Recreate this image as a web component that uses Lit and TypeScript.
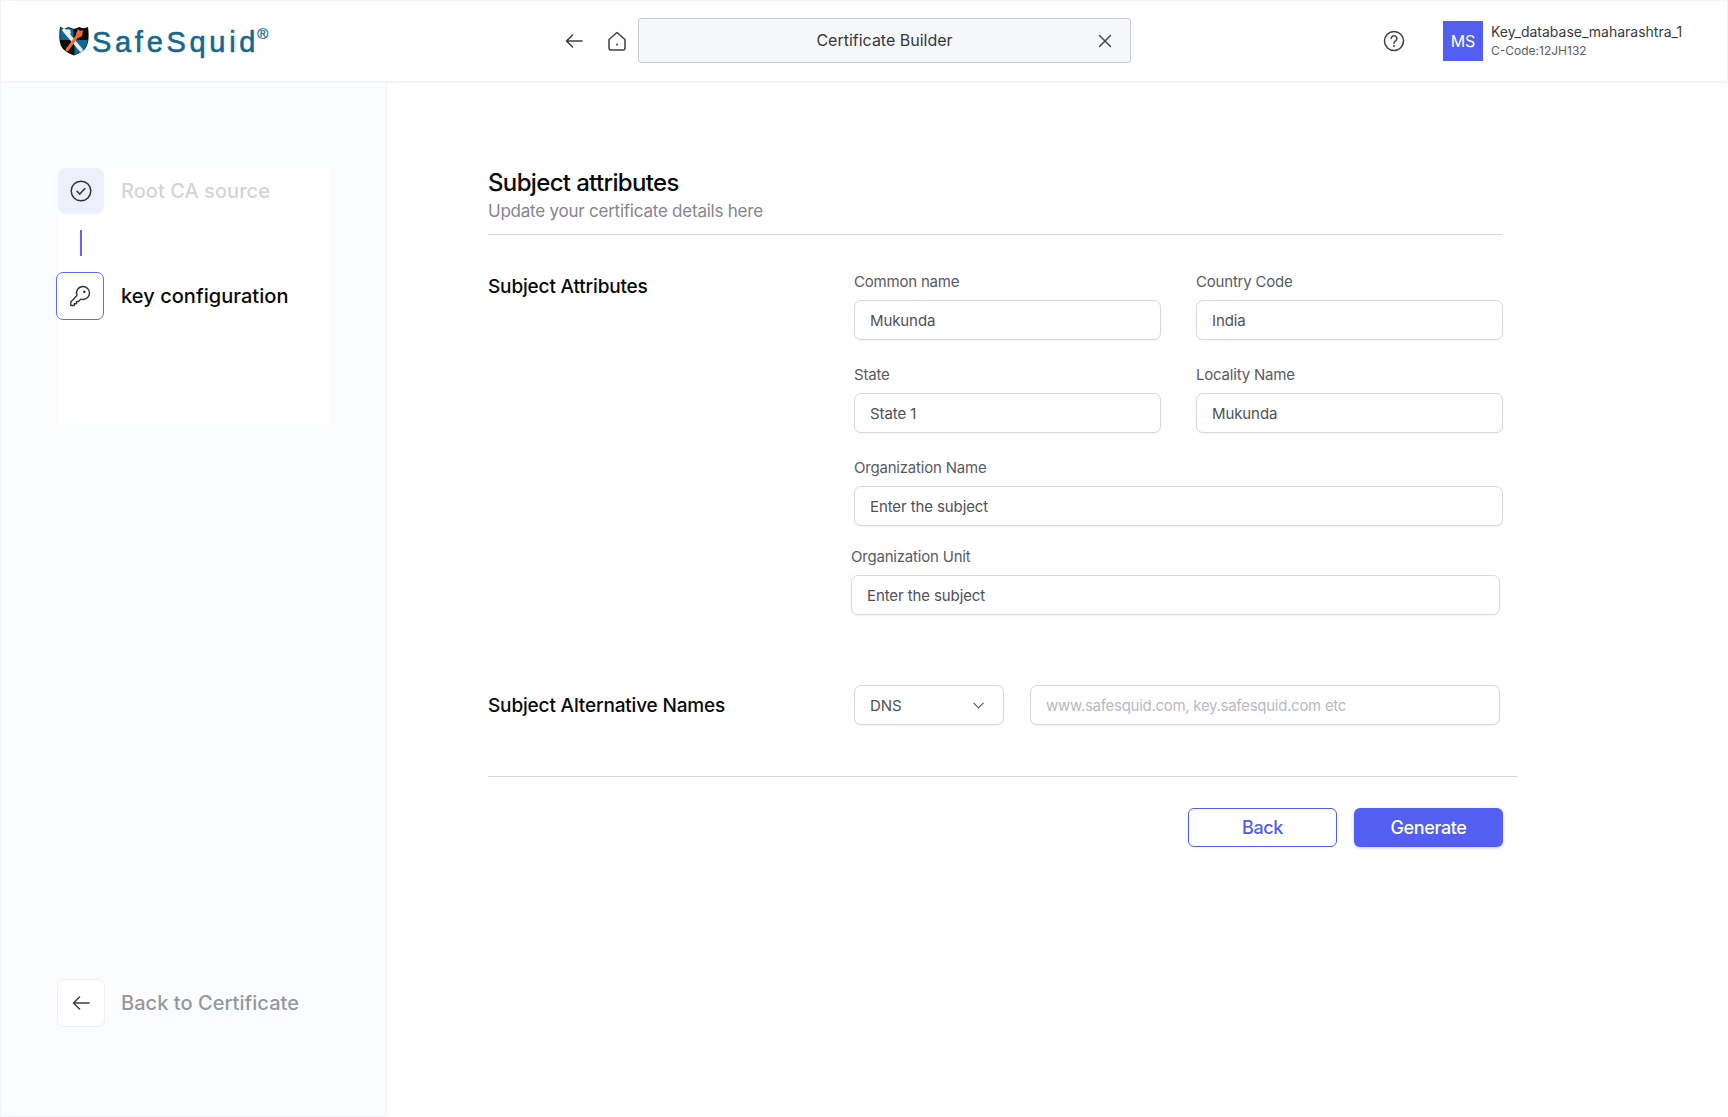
import { LitElement, html, css, svg } from "lit";
import { customElement } from "lit/decorators.js";

const arrowLeft = svg`<path d="M20 12H4.5M10.5 6l-6 6 6 6" fill="none" stroke="currentColor" stroke-width="1.6" stroke-linecap="round" stroke-linejoin="round"/>`;

@customElement("app-root")
export class AppRoot extends LitElement {
  static styles = css`
    :host { display: block; width: 1728px; height: 1117px; background: #fff; font-family: Inter, "Liberation Sans", sans-serif; color: #3f4046; overflow: hidden; }
    * { box-sizing: border-box; }
    .header { height: 83px; padding-bottom: 1px; border: 1px solid #f3f4f9; border-bottom-width: 2px; display: flex; align-items: center; position: relative; }
    .logo { width: 504px; padding-left: 57px; display: flex; align-items: center; gap: 2px; margin-top: -1px; flex: none; }
    .logo-text { font-family: "Liberation Sans", sans-serif; font-size: 29px; color: #14688e; letter-spacing: 3.7px; line-height: 34px; margin-top: 3px; -webkit-text-stroke: .6px #14688e; }
    .logo-text sup { font-size: 15px; letter-spacing: 0; line-height: 0; vertical-align: 13px; margin-left: -2px; -webkit-text-stroke: .3px #14688e; }
    .nav { display: flex; align-items: center; flex: none; }
    .nav-back { width: 24px; height: 24px; color: #3f4046; margin-left: 57px; }
    .nav-home { width: 24px; height: 24px; color: #3f4046; margin-left: 19px; }
    .tab { width: 493px; height: 45px; margin-left: 9px; background: #f6f7f9; border: 1px solid #c9cbd4; border-radius: 3px; display: flex; align-items: center; justify-content: center; position: relative; font-size: 16px; color: #36373c; padding-bottom: 1px; }
    .tab svg { position: absolute; right: 14px; top: 11px; width: 22px; height: 22px; color: #46474c; }
    .help { width: 24px; height: 24px; margin-left: 251px; color: #3f4046; flex: none; }
    .avatar { width: 40px; height: 40px; background: #525ff0; color: #fff; font-size: 16px; display: flex; align-items: center; justify-content: center; margin-left: 37px; flex: none; }
    .user { margin-left: 8px; display: flex; flex-direction: column; gap: 3px; white-space: nowrap; }
    .user b { font-weight: 400; font-size: 14px; line-height: 17px; color: #3a3b40; }
    .user span { font-size: 12px; line-height: 15px; color: #5c5d63; }

    .body { display: flex; height: 1034px; }
    .side { width: 387px; flex: none; background: #fbfcff; border: 1px solid #f1f3fa; border-top: 0; border-radius: 0 0 4px 0; padding: 85px 57px 0 56px; display: flex; flex-direction: column; }
    .steps { height: 257px; background: #fff; display: flex; flex-direction: column; }
    .step { display: flex; align-items: center; gap: 17px; }
    .box { width: 46px; height: 46px; border-radius: 7px; display: flex; align-items: center; justify-content: center; flex: none; margin-left: 1px; }
    .box svg { width: 24px; height: 24px; color: #34353a; }
    .box.done { background: #edf0fa; }
    .box.active { width: 48px; height: 48px; margin-left: -1px; border: 1px solid #5f6bf1; background: #fff; }
    .step-label { font-size: 20px; line-height: 26px; font-weight: 450; letter-spacing: .05px; }
    .step-label.off { color: #d3d4da; }
    .step-label.on { color: #09090b; }
    .connector { width: 2px; height: 26px; background: #5c68f2; margin: 16px 0 16px 23px; }
    .back-link { display: flex; align-items: center; gap: 16px; margin-top: 554px; }
    .back-box { width: 48px; height: 48px; border-radius: 7px; border: 1px solid #eef0f8; background: #fff; display: flex; align-items: center; justify-content: center; flex: none; }
    .back-box svg { width: 24px; height: 24px; color: #3f4046; }
    .back-link span { font-size: 20px; line-height: 26px; font-weight: 450; color: #96979d; letter-spacing: .05px; }

    .main { flex: 1; min-width: 0; padding: 85px 225px 0 101px; }
    .title { font-size: 24px; line-height: 30px; font-weight: 500; color: #0a0a0c; letter-spacing: -.65px; }
    .subtitle { font-size: 17px; line-height: 24px; color: #85868d; margin-top: 1px; letter-spacing: -.23px; }
    .rule { height: 1px; background: #d6d8e2; margin-top: 11px; }
    .section { display: grid; grid-template-columns: 366px 1fr; }
    .attrs { margin-top: 37px; }
    .attrs .section-title { margin-top: 2px; }
    .section-title { font-size: 19px; line-height: 26px; font-weight: 500; color: #0a0a0c; letter-spacing: -.16px; }
    .san .section-title { padding-top: 2px; }
    .grid { display: grid; grid-template-columns: 307px 307px; column-gap: 35px; row-gap: 25px; }
    .field { display: flex; flex-direction: column; gap: 8px; }
    .field.wide { grid-column: 1 / 3; width: 649px; }
    .field.shift { margin-left: -3px; margin-top: -4px; }
    .field label { font-size: 15px; line-height: 20px; color: #5a5b61; letter-spacing: -.2px; }
    .input { height: 40px; border: 1px solid #d6d8e4; border-radius: 7px; padding: 0 15px; display: flex; align-items: center; font-size: 15px; color: #505157; background: #fff; box-shadow: 0 1px 2px rgba(40,44,80,.06); letter-spacing: -.1px; }
    .san { margin-top: 70px; align-items: center; }
    .san-row { display: flex; gap: 26px; }
    .select { width: 150px; justify-content: space-between; padding-right: 17px; }
    .select svg { width: 15px; height: 15px; color: #55565c; }
    .placeholder { width: 470px; color: #b9bac0; letter-spacing: -.28px; }
    .rule2 { height: 1px; background: #d8d9df; margin-top: 51px; width: 1029px; }
    .actions { display: flex; justify-content: flex-end; gap: 17px; margin-top: 31px; }
    .btn { width: 149px; height: 39px; border-radius: 6px; font-size: 18px; font-weight: 500; display: flex; align-items: center; justify-content: center; letter-spacing: -.4px; }
    .btn.out { border: 1px solid #4f5cf0; color: #4f5cf0; background: #fff; }
    .btn.fill { background: #525ff0; color: #fff; box-shadow: 0 1px 3px rgba(60,70,200,.3); }
  `;

  field(label: string, value: string, cls = "") {
    return html`<div class="field ${cls}"><label>${label}</label><div class="input">${value}</div></div>`;
  }

  render() {
    return html`
      <div class="header">
        <div class="logo">
          <svg width="32" height="32" viewBox="0 0 32 32">
            <path d="M2 3c3 1.500 6 1.500 9 0 2 1 3.500 1.500 5 2 1.500-.5 3-1 5-2 3 1.500 6 1.500 9 0 1.200 9 1 17-3 22-2.500 3-7 5-11 6.500C12 30 7.500 28 5 25 1 20 .8 12 2 3z" fill="#0b0b0d"/>
            <path d="M2.500 4c3 1 5.500 1 8.500-.2 2 1 3.500 1.400 4.500 1.800V16H2.300C2 12 2 8 2.500 4zM16.500 16H29.700c-.4 4-1.200 7-3.200 9.300-2.500 2.500-6 4.300-10 5.700V16z" fill="#14688e"/>
            <path d="M6 6l17 20" stroke="#e8edf0" stroke-width="3.600" stroke-linecap="round"/>
            <path d="M7 5.500h5l1 4-3 1z" fill="#e8edf0"/>
            <path d="M9 26l11-15" stroke="#ef6a2a" stroke-width="3" stroke-linecap="round"/>
            <path d="M18 10l2-5 2 2 3-1-1 6-4 2z" fill="#ef6a2a"/>
          </svg>
          <div class="logo-text">SafeSquid<sup>®</sup></div>
        </div>
        <div class="nav">
          <svg class="nav-back" viewBox="0 0 24 24">${arrowLeft}</svg>
          <svg class="nav-home" viewBox="0 0 24 24"><path d="M4 10.500 12 3.500l8 7v8.500a2 2 0 0 1-2 2H6a2 2 0 0 1-2-2z" fill="none" stroke="currentColor" stroke-width="1.500" stroke-linejoin="round"/><circle cx="12" cy="15.500" r="1" fill="currentColor"/></svg>
          <div class="tab">Certificate Builder
            <svg viewBox="0 0 24 24"><path d="M6 6l12 12M18 6 6 18" fill="none" stroke="currentColor" stroke-width="1.600" stroke-linecap="round"/></svg>
          </div>
        </div>
        <svg class="help" viewBox="0 0 24 24"><circle cx="12" cy="12" r="9.500" fill="none" stroke="currentColor" stroke-width="1.500"/><path d="M9.300 9.500a2.800 2.800 0 1 1 4.300 2.400c-1 .6-1.600 1.200-1.600 2.300" fill="none" stroke="currentColor" stroke-width="1.500" stroke-linecap="round"/><circle cx="12" cy="17" r="1" fill="currentColor"/></svg>
        <div class="avatar">MS</div>
        <div class="user"><b>Key_database_maharashtra_1</b><span>C-Code:12JH132</span></div>
      </div>
      <div class="body">
        <div class="side">
          <div class="steps">
            <div class="step">
              <div class="box done"><svg viewBox="0 0 24 24"><circle cx="12" cy="12" r="9.800" fill="none" stroke="currentColor" stroke-width="1.500"/><path d="M8 12.300l2.800 2.800L16 9.500" fill="none" stroke="currentColor" stroke-width="1.500" stroke-linecap="round" stroke-linejoin="round"/></svg></div>
              <div class="step-label off">Root CA source</div>
            </div>
            <div class="connector"></div>
            <div class="step">
              <div class="box active"><svg viewBox="0 0 24 24"><path d="M15 2.500a6.500 6.500 0 0 1 0 13c-.9 0-1.600-.2-2.300-.4L10.500 17.500H8.500V19.800H6.300V21.500H2.800V18L9 11.500a6.500 6.500 0 0 1 6-9z" fill="none" stroke="currentColor" stroke-width="1.400" stroke-linejoin="round"/><circle cx="16.300" cy="7.700" r="1.300" fill="currentColor"/></svg></div>
              <div class="step-label on">key configuration</div>
            </div>
          </div>
          <div class="back-link">
            <div class="back-box"><svg viewBox="0 0 24 24">${arrowLeft}</svg></div>
            <span>Back to Certificate</span>
          </div>
        </div>
        <div class="main">
          <div class="title">Subject attributes</div>
          <div class="subtitle">Update your certificate details here</div>
          <div class="rule"></div>
          <div class="section attrs">
            <div class="section-title">Subject Attributes</div>
            <div class="grid">
              ${this.field("Common name", "Mukunda")}
              ${this.field("Country Code", "India")}
              ${this.field("State", "State 1")}
              ${this.field("Locality Name", "Mukunda")}
              ${this.field("Organization Name", "Enter the subject", "wide")}
              ${this.field("Organization Unit", "Enter the subject", "wide shift")}
            </div>
          </div>
          <div class="section san">
            <div class="section-title">Subject Alternative Names</div>
            <div class="san-row">
              <div class="input select">DNS<svg viewBox="0 0 16 16"><path d="M3 5.500 8 10.500l5-5" fill="none" stroke="currentColor" stroke-width="1.200" stroke-linecap="round" stroke-linejoin="round"/></svg></div>
              <div class="input placeholder">www.safesquid.com, key.safesquid.com etc</div>
            </div>
          </div>
          <div class="rule2"></div>
          <div class="actions">
            <div class="btn out">Back</div>
            <div class="btn fill">Generate</div>
          </div>
        </div>
      </div>
    `;
  }
}
